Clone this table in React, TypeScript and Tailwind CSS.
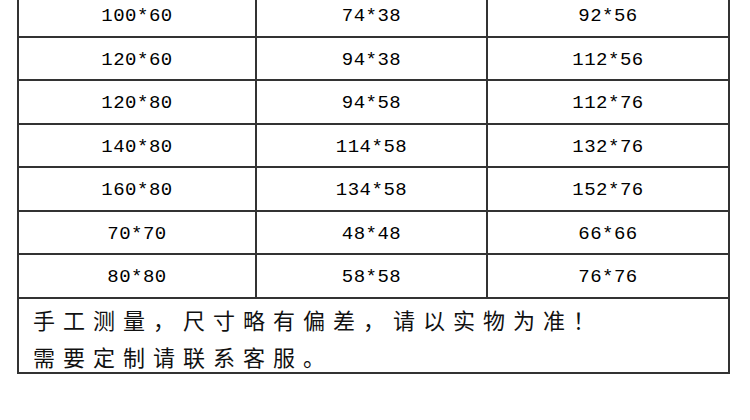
const rows: [string, string, string][] = [
  ['100*60', '74*38', '92*56'],
  ['120*60', '94*38', '112*56'],
  ['120*80', '94*58', '112*76'],
  ['140*80', '114*58', '132*76'],
  ['160*80', '134*58', '152*76'],
  ['70*70', '48*48', '66*66'],
  ['80*80', '58*58', '76*76'],
]

export default function App() {
  return (
    <div className="w-[750px] h-[420px] overflow-hidden bg-white">
      <div className="ml-[17px] mt-[-6px] w-[713px] border-x-2 border-b-2 border-[#333]">
        {rows.map((r, i) => (
          <div
            key={i}
            className="grid grid-cols-[238px_231px_1fr] h-[43.5px] border-b-2 border-[#333] text-[19px] text-black tracking-[0.5px] [font-family:'Liberation_Mono',monospace]"
          >
            {r.map((c, j) => (
              <div
                key={j}
                className={`flex items-center justify-center pt-[3px] ${j < 2 ? 'border-r-2 border-[#333]' : ''}`}
              >
                {c}
              </div>
            ))}
          </div>
        ))}
        <div className="h-[73px] pl-[14px] pt-[2px] text-[22px] leading-[37px] tracking-[8px] text-[#111] [font-family:'Noto_Sans_CJK_SC',sans-serif]">
          <p>手工测量，尺寸略有偏差，请以实物为准！</p>
          <p>需要定制请联系客服。</p>
        </div>
      </div>
    </div>
  )
}
